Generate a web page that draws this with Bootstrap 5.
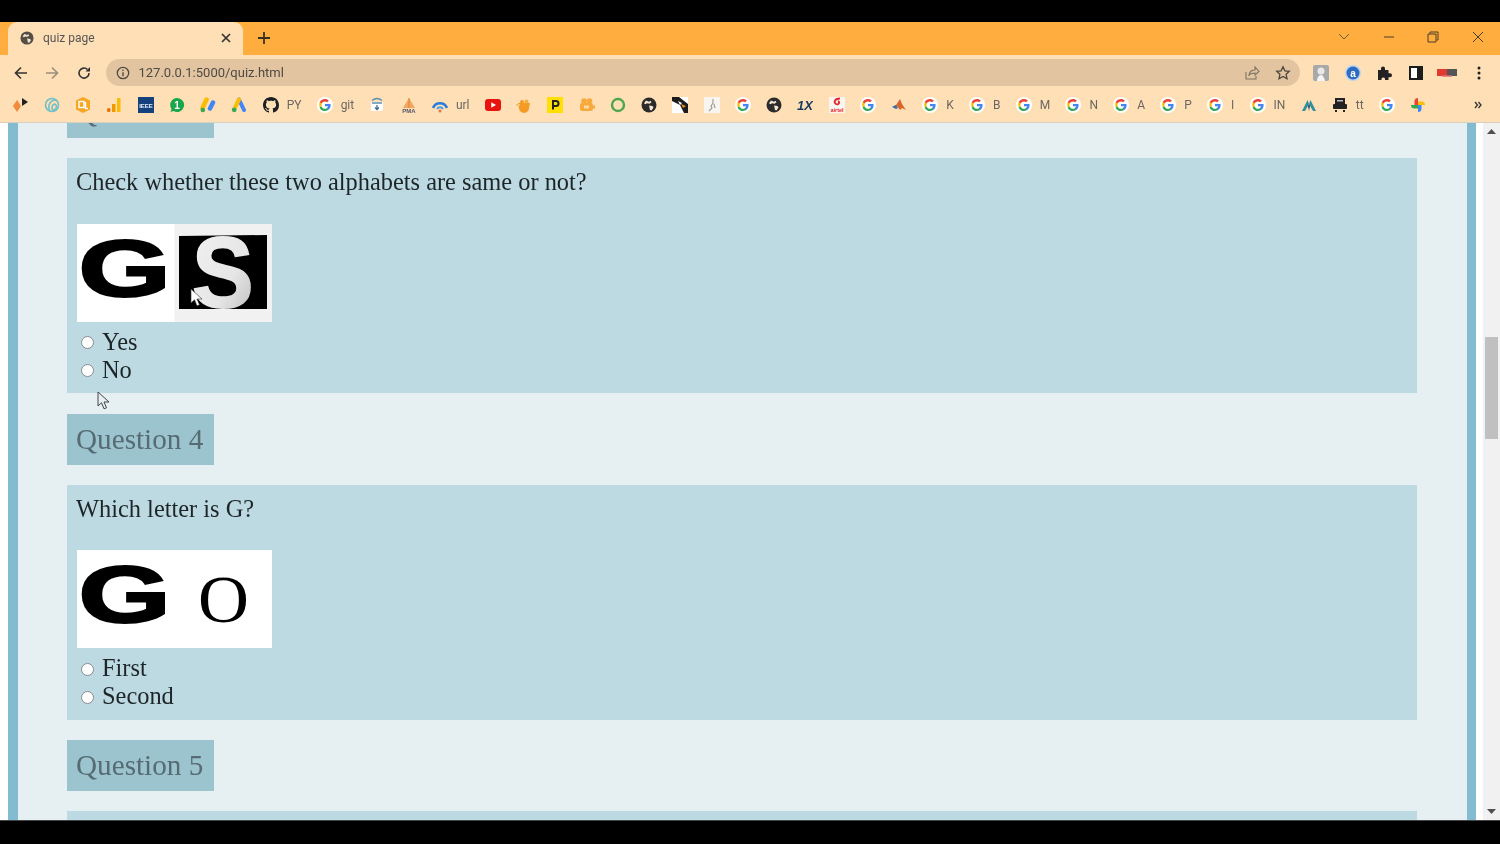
<!DOCTYPE html>
<html lang="en">
<head>
<meta charset="utf-8">
<title>quiz page</title>
<link href="https://cdn.jsdelivr.net/npm/bootstrap@5.3.0/dist/css/bootstrap.min.css" rel="stylesheet">
<style>
html,body{height:100%;overflow:hidden;background:#000}
.screen{width:1500px;height:844px;filter:blur(.35px)}
.screen>*{flex:none}
.bar-top{height:22px;background:#000}
.bar-bottom{height:24px;background:#000;border-top:1px solid #444}
.tabstrip{height:33px;background:#ffad3f;padding-left:8px}
.tab-active{width:235px;height:33px;background:#ffdfb5;border-radius:9px 9px 0 0;padding:0 12px 2px 12px;font:12px Roboto,sans-serif;color:#555}
.tab-active .tab-title{margin-left:9px}
.newtab{margin:-2px 0 0 14px}
.winctl{width:44.5px;justify-content:center}
.win-group{margin-top:-4px}
.toolbar{height:35px;background:#ffdfb5;padding-left:5px}
.tool{width:31.5px;flex:none;justify-content:center}
.omni{width:1194px;height:27px;margin:0 6px 0 6px;background:#e2c5a0;border-radius:14px;padding:0 4px 0 10px;font:13px Roboto,sans-serif;color:#4f4a42}
.omni .url{margin-left:9px}
.star-ico{margin:0 5px 0 15px}
.bookmarks{height:33px;background:#ffdfb5;border-bottom:1px solid #d8cfc0;padding:0 0 3px 5px;font:12px Roboto,sans-serif;color:#6a6660}
.bm{flex:none;padding:0 7.625px;height:100%;gap:8px;display:flex;align-items:center}
.bm-pad{padding-right:7.6px}
.bm-more{width:26px}
.page-view{flex:1 1 0!important;min-height:0;background:#fff;overflow:hidden}
.page-main{width:1483px;overflow:hidden;padding:0 7px 0 8px}
.quiz-frame{height:100%;background:#e6eff1;border-left:10px solid #83bcd1;border-right:9px solid #83bcd1;padding:0 50px 0 49px;overflow:hidden;font-family:"Liberation Serif",serif}
.quiz-scroll{margin-top:-36px}
.q-head{width:147px;height:51px;background:#9cc4cf;color:#566b73;font-size:29.2px;line-height:51px;padding-left:9px;white-space:nowrap;margin-bottom:20px}
.q-box{background:#bddae3;padding:10px 10px 8px;color:#1d2527;font-size:24.4px;line-height:28px;margin-bottom:20.5px;height:235px}
.q-text{height:55.7px;margin:0 0 0 -1px}
.q-img{width:195px;height:98px;margin-bottom:6px;display:block;background:#fff}
.q-opt{height:28px;display:flex;align-items:center;padding-left:4px}
.q-radio{width:13px;height:13px;margin:2px 8px 0 0;border:1.5px solid #8b8b8b;background:#fff;flex:none}
.sbar{width:17px;background:#f1f1f1}
.sbar-btn{height:17px;justify-content:center}
.sbar-thumb{height:102px;width:13px;margin:197px auto 0;background:#c0c0c0}
.sbar-fill{flex:1}
.cursor-mark{position:absolute;pointer-events:none}
.cur-a{left:190px;top:288px}
.cur-b{left:97px;top:391px}
svg{display:block;flex:none}
.svg-bold{font-family:"Liberation Sans",sans-serif;font-weight:700}
.svg-serif{font-family:"Liberation Serif",serif}
.svg-defs{position:absolute}
</style>
</head>
<body>
<svg class="svg-defs" width="0" height="0">
<defs>
<linearGradient id="sgrad" x1="0" y1="0" x2="1" y2="1"><stop offset="0" stop-color="#f2f2f2"/><stop offset=".6" stop-color="#e6e6e6"/><stop offset="1" stop-color="#b8b8b8"/></linearGradient>
<symbol id="goog" viewBox="0 0 16 16"><circle cx="8" cy="8" r="8" fill="#fff"/><path d="M13.6 8.2c0-.4 0-.8-.1-1.200H8v2.300h3.100c-.1.700-.5 1.300-1.200 1.800v1.400h1.900c1.100-1 1.800-2.500 1.800-4.300z" fill="#4285f4"/><path d="M8 14c1.600 0 2.900-.5 3.800-1.400l-1.900-1.400c-.5.400-1.200.6-1.900.6-1.500 0-2.800-1-3.300-2.400H2.800v1.500C3.700 12.800 5.700 14 8 14z" fill="#34a853"/><path d="M4.700 9.400c-.3-.9-.3-1.900 0-2.800V5.100H2.800c-.8 1.500-.8 3.300 0 4.800z" fill="#fbbc05"/><path d="M8 4.400c.8 0 1.600.3 2.200.9l1.700-1.700C10.800 2.600 9.500 2 8 2 5.700 2 3.700 3.200 2.800 5.100l1.900 1.500C5.200 5.300 6.500 4.400 8 4.400z" fill="#ea4335"/></symbol>
<symbol id="globe" viewBox="0 0 16 16"><circle cx="8" cy="8" r="7.500" fill="#2b2b2b"/><path d="M5 3.500l3 1.200 1.500-1 1 1.500-2 1.500-2.500-.5-1.500 1-1.500-1zM8 8.500l3.500.5 1 1.500-2 3-1.500-.5-.5-2.500z" fill="#f4e6d2"/></symbol>
</defs>
</svg>

<div class="screen d-flex flex-column position-relative">
  <div class="bar-top"></div>

  <div class="tabstrip d-flex align-items-center">
    <div class="tab-active d-flex align-items-center">
      <svg width="14" height="14"><use href="#globe" width="14" height="14" opacity=".8"/></svg>
      <span class="tab-title flex-grow-1">quiz page</span>
      <svg width="10" height="10" viewBox="0 0 10 10"><path d="M1 1l8 8M9 1l-8 8" stroke="#333" stroke-width="1.700"/></svg>
    </div>
    <svg class="newtab" width="14" height="14" viewBox="0 0 14 14"><path d="M7 1v12M1 7h12" stroke="#3a3020" stroke-width="1.800"/></svg>
    <div class="ms-auto d-flex align-items-center win-group">
      <div class="winctl d-flex"><svg width="12" height="8" viewBox="0 0 12 8"><path d="M1 1l5 5 5-5" fill="none" stroke="#6d5a3c" stroke-width="1"/></svg></div>
      <div class="winctl d-flex"><svg width="12" height="2" viewBox="0 0 12 2"><path d="M1 1h10" stroke="#4a3c28" stroke-width="1"/></svg></div>
      <div class="winctl d-flex"><svg width="12" height="12" viewBox="0 0 12 12"><path d="M3 2.500V1h8v8H9.500M1 3h8v8H1z" fill="none" stroke="#4a3c28" stroke-width="1"/></svg></div>
      <div class="winctl d-flex"><svg width="12" height="12" viewBox="0 0 12 12"><path d="M1 1l10 10M11 1L1 11" stroke="#4a3c28" stroke-width="1"/></svg></div>
    </div>
  </div>

  <div class="toolbar d-flex align-items-center">
    <div class="tool d-flex"><svg width="14" height="14" viewBox="0 0 14 14"><path d="M13 7H2M7 1.500L1.500 7 7 12.500" fill="none" stroke="#333" stroke-width="1.600"/></svg></div>
    <div class="tool d-flex"><svg width="14" height="14" viewBox="0 0 14 14"><path d="M1 7h11M7 1.500L12.500 7 7 12.500" fill="none" stroke="#9a8e7c" stroke-width="1.600"/></svg></div>
    <div class="tool d-flex"><svg width="14" height="14" viewBox="0 0 14 14"><path d="M12 7a5 5 0 1 1-1.500-3.500" fill="none" stroke="#333" stroke-width="1.600"/><path d="M13 1v4.500H8.500z" fill="#333"/></svg></div>
    <div class="omni d-flex align-items-center">
      <svg width="14" height="14" viewBox="0 0 14 14"><circle cx="7" cy="7" r="5.700" fill="none" stroke="#4f4a42" stroke-width="1.300"/><path d="M7 6.200v4M7 3.700v1.300" stroke="#4f4a42" stroke-width="1.400"/></svg>
      <span class="url">127.0.0.1:5000/quiz.html</span>
      <svg class="ms-auto" width="16" height="16" viewBox="0 0 16 16"><path d="M2 7v7h10v-3M5 10c.5-3 3-5 6-5V2l4 4.500L11 10V8C8.500 8 6.500 8.500 5 10z" fill="none" stroke="#7d7364" stroke-width="1.100"/></svg>
      <svg class="star-ico" width="16" height="16" viewBox="0 0 16 16"><path d="M8 1.800l1.900 4 4.400.5-3.200 3 .9 4.400L8 11.500l-4 2.200.9-4.400-3.200-3 4.400-.5z" fill="none" stroke="#4c463c" stroke-width="1.300"/></svg>
    </div>
    <div class="tool d-flex"><svg width="16" height="16" viewBox="0 0 16 16"><rect width="16" height="16" rx="2" fill="#a8a8a8"/><circle cx="8" cy="6" r="3.500" fill="#e8e8e8"/><path d="M4 16c0-5 3-6 4-6s3 1 4 6z" fill="#f4f4f4"/></svg></div>
    <div class="tool d-flex"><svg width="16" height="16" viewBox="0 0 16 16"><circle cx="8" cy="8" r="8" fill="#bcd3ee"/><circle cx="8" cy="8" r="6.500" fill="#2d6cc0"/><text x="8" y="11.500" text-anchor="middle" font-size="10" font-weight="700" fill="#fff" font-family="Liberation Sans">a</text></svg></div>
    <div class="tool d-flex"><svg width="15" height="15" viewBox="0 0 15 15"><path d="M1 5h3V3.500a2 2 0 0 1 4 0V5h3.500v3.300H13a2 2 0 0 1 0 4h-1.500V15H8v-1.500a2 2 0 0 0-3.500 0V15H1z" fill="#222"/></svg></div>
    <div class="tool d-flex"><svg width="14" height="14" viewBox="0 0 14 14"><path d="M0 0h14v14H0z" fill="#1c1c1c"/><path d="M2 2h6v10H2z" fill="#fff"/></svg></div>
    <div class="tool d-flex"><svg width="20" height="9" viewBox="0 0 20 9"><rect width="10" height="7" y="1" fill="#e23a30"/><rect x="10" width="10" height="7" y="1" fill="#555"/><rect x="5" y="7.500" width="10" height="1.500" fill="#e88"/></svg></div>
    <div class="tool d-flex"><svg width="4" height="14" viewBox="0 0 4 14"><circle cx="2" cy="2" r="1.500" fill="#222"/><circle cx="2" cy="7" r="1.500" fill="#222"/><circle cx="2" cy="12" r="1.500" fill="#222"/></svg></div>
  </div>

  <div class="bookmarks d-flex align-items-center">
    <div class="bm"><svg width="16" height="16" viewBox="0 0 16 16"><path d="M4 3l4 6-4 6-4-6z" fill="#f08c3c"/><path d="M9 1l6 4-6 4z" fill="#222"/></svg></div>
    <div class="bm"><svg width="16" height="16" viewBox="0 0 16 16"><g fill="none" stroke="#6fc0c8" stroke-width="1.600"><circle cx="8" cy="8" r="6.500"/><path d="M6 14C3 9 6 3 12 3M11 14c-4-1-4-6 0-7 2 1 2 5-1 6"/></g></svg></div>
    <div class="bm"><svg width="16" height="16" viewBox="0 0 16 16"><path d="M8 0l7 3.500v9L8 16l-7-3.500v-9z" fill="#f5a623"/><rect x="4" y="4.500" width="5" height="6" fill="none" stroke="#fff" stroke-width="1.400"/><path d="M10.500 5v6.500H13" fill="none" stroke="#fff" stroke-width="1.400"/></svg></div>
    <div class="bm"><svg width="16" height="16" viewBox="0 0 16 16"><rect x="1" y="11" width="3.500" height="4" rx="1.500" fill="#e8710a"/><rect x="6" y="7" width="3.500" height="8" fill="#f29900"/><rect x="11" y="1" width="3.500" height="14" fill="#fbbc05"/></svg></div>
    <div class="bm"><svg width="16" height="16" viewBox="0 0 16 16"><rect width="16" height="16" fill="#14407e"/><text x="8" y="10.500" text-anchor="middle" font-size="6" font-weight="700" fill="#e8eef8" font-family="Liberation Sans">IEEE</text></svg></div>
    <div class="bm"><svg width="16" height="16" viewBox="0 0 16 16"><path d="M8 1a7 7 0 1 1-3.500 13L1.500 15l1-3A7 7 0 0 1 8 1z" fill="#1aa64a"/><text x="8" y="11.500" text-anchor="middle" font-size="10" font-weight="700" fill="#fff" font-family="Liberation Sans">1</text></svg></div>
    <div class="bm"><svg width="16" height="16" viewBox="0 0 16 16"><path d="M6.500 2.500L2.500 11" stroke="#fbbc05" stroke-width="4.500" stroke-linecap="round"/><path d="M13 5.500L10 11.500" stroke="#4285f4" stroke-width="4.500" stroke-linecap="round"/><circle cx="2.800" cy="13" r="2.300" fill="#34a853"/></svg></div>
    <div class="bm"><svg width="16" height="16" viewBox="0 0 16 16"><path d="M8 2.500L13 13" stroke="#4285f4" stroke-width="4" stroke-linecap="round"/><path d="M8 2.500L4.500 9.500" stroke="#fbbc05" stroke-width="4" stroke-linecap="round"/><circle cx="3.200" cy="12.800" r="2.400" fill="#34a853"/></svg></div>
    <div class="bm bm-pad"><svg width="16" height="16" viewBox="0 0 16 16"><path fill="#1b1f23" d="M8 0C3.580 0 0 3.580 0 8c0 3.540 2.290 6.530 5.470 7.590.4.070.55-.170.55-.380 0-.190-.010-.820-.010-1.490-2.010.370-2.530-.490-2.690-.940-.090-.230-.480-.940-.820-1.130-.280-.150-.680-.520-.010-.530.630-.010 1.080.580 1.230.820.720 1.210 1.870.870 2.330.660.070-.520.280-.870.510-1.070-1.780-.200-3.640-.890-3.640-3.950 0-.870.310-1.590.820-2.150-.080-.200-.360-1.020.080-2.120 0 0 .670-.210 2.200.820.640-.180 1.320-.270 2-.270s1.360.090 2 .270c1.530-1.040 2.200-.820 2.200-.820.440 1.100.160 1.920.080 2.120.510.560.820 1.270.820 2.150 0 3.070-1.870 3.750-3.650 3.950.290.250.540.730.540 1.480 0 1.070-.010 1.930-.010 2.200 0 .210.150.460.550.380A8.010 8.010 0 0 0 16 8c0-4.420-3.580-8-8-8z"/></svg><span>PY</span></div>
    <div class="bm bm-pad"><svg width="16" height="16"><use href="#goog" width="16" height="16"/></svg><span>git</span></div>
    <div class="bm"><svg width="16" height="16" viewBox="0 0 16 16"><rect x="2" y="5" width="12" height="9" rx="1" fill="#fff"/><path d="M3 6h10M3 3.500c3-2.500 7-2.500 10 0" fill="none" stroke="#5b8fb5" stroke-width="1.400"/><path d="M8 8v4M6 10.500L8 12.500l2-2" fill="none" stroke="#3b6b8f" stroke-width="1.300"/></svg></div>
    <div class="bm"><svg width="16" height="16" viewBox="0 0 16 16"><path d="M8 1l6 10H2z" fill="#f0a860"/><path d="M8 1v10" stroke="#e88030"/><text x="8" y="15.500" text-anchor="middle" font-size="6" font-weight="700" fill="#556" font-family="Liberation Sans">PMA</text></svg></div>
    <div class="bm bm-pad"><svg width="16" height="16" viewBox="0 0 16 16"><path d="M1 11a7.500 7.500 0 0 1 14 0" fill="none" stroke="#2d7ddb" stroke-width="2.600"/><path d="M5 12a3.500 3.500 0 0 1 6 0" fill="none" stroke="#44a0e8" stroke-width="2"/><circle cx="8" cy="14" r="1.500" fill="#e8743c"/></svg><span>url</span></div>
    <div class="bm"><svg width="16" height="16" viewBox="0 0 16 16"><rect y="2" width="16" height="12" rx="3" fill="#e8130e"/><path d="M6.300 5.200L11 8l-4.700 2.800z" fill="#fff"/></svg></div>
    <div class="bm"><svg width="16" height="16" viewBox="0 0 16 16"><path d="M2 6h12l-1 5a3 3 0 0 1-10 0z" fill="#f59b23"/><circle cx="6" cy="5" r="2" fill="#f59b23"/><circle cx="10.500" cy="4.500" r="2" fill="#f0b040"/><rect x="0" y="7" width="4" height="2" fill="#f3c17a"/></svg></div>
    <div class="bm"><svg width="16" height="16" viewBox="0 0 16 16"><rect width="16" height="16" fill="#ffe000"/><path d="M6 12.500V4h3a2.500 2.500 0 0 1 0 5H6" fill="none" stroke="#222" stroke-width="2"/></svg></div>
    <div class="bm"><svg width="16" height="16" viewBox="0 0 16 16"><rect x="1" y="6" width="13" height="8" rx="2" fill="#f7a93c"/><circle cx="5" cy="4" r="2.800" fill="#f7a93c"/><circle cx="10.500" cy="4" r="2.800" fill="#f7a93c"/><path d="M14 9l2-1v4l-2-1z" fill="#f7a93c"/><rect x="5" y="8.500" width="5" height="3" fill="#ffd9a0"/></svg></div>
    <div class="bm"><svg width="16" height="16" viewBox="0 0 16 16"><circle cx="8" cy="8" r="6" fill="none" stroke="#4ca64c" stroke-width="2.400"/></svg></div>
    <div class="bm"><svg width="16" height="16"><use href="#globe" width="16" height="16"/></svg></div>
    <div class="bm"><svg width="16" height="16" viewBox="0 0 16 16"><rect width="16" height="16" fill="#fff"/><path d="M0 0h7l9 7v9h-4L8 8 0 4z" fill="#1c1c1c"/><path d="M6 4l4 2-2 2z" fill="#fff"/><path d="M9 7l5 2-3 2z" fill="#e88a20"/></svg></div>
    <div class="bm"><svg width="16" height="16" viewBox="0 0 16 16"><rect width="16" height="16" fill="#f8f5f0"/><path d="M9 2v4l-2 3 1 2-3 3M10 7l1 4" fill="none" stroke="#999" stroke-width="1.100"/></svg></div>
    <div class="bm"><svg width="16" height="16"><use href="#goog" width="16" height="16"/></svg></div>
    <div class="bm"><svg width="16" height="16"><use href="#globe" width="16" height="16"/></svg></div>
    <div class="bm"><svg width="16" height="16" viewBox="0 0 16 16"><text x="8" y="12.500" text-anchor="middle" font-size="13" font-weight="700" font-style="italic" fill="#17385e" font-family="Liberation Sans">1X</text></svg></div>
    <div class="bm"><svg width="16" height="16" viewBox="0 0 16 16"><rect width="16" height="16" fill="#fbf6f0"/><path d="M11 1.500C6 1.500 4 5 7 7c3 1.500 4-2 2-3" fill="none" stroke="#e3242b" stroke-width="1.800"/><text x="8" y="14.500" text-anchor="middle" font-size="5.500" font-weight="700" fill="#e3242b" font-family="Liberation Sans">airtel</text></svg></div>
    <div class="bm"><svg width="16" height="16"><use href="#goog" width="16" height="16"/></svg></div>
    <div class="bm"><svg width="16" height="16" viewBox="0 0 16 16"><path d="M1 10l4-2 4-6 2 5 4 6-4-2-2 2-3-4z" fill="#d8662c"/><path d="M1 10l4-2 2 3-2 1z" fill="#3a6ea8"/></svg></div>
    <div class="bm bm-pad"><svg width="16" height="16"><use href="#goog" width="16" height="16"/></svg><span>K</span></div>
    <div class="bm bm-pad"><svg width="16" height="16"><use href="#goog" width="16" height="16"/></svg><span>B</span></div>
    <div class="bm bm-pad"><svg width="16" height="16"><use href="#goog" width="16" height="16"/></svg><span>M</span></div>
    <div class="bm bm-pad"><svg width="16" height="16"><use href="#goog" width="16" height="16"/></svg><span>N</span></div>
    <div class="bm bm-pad"><svg width="16" height="16"><use href="#goog" width="16" height="16"/></svg><span>A</span></div>
    <div class="bm bm-pad"><svg width="16" height="16"><use href="#goog" width="16" height="16"/></svg><span>P</span></div>
    <div class="bm bm-pad"><svg width="16" height="16"><use href="#goog" width="16" height="16"/></svg><span>I</span></div>
    <div class="bm bm-pad"><svg width="16" height="16"><use href="#goog" width="16" height="16"/></svg><span>IN</span></div>
    <div class="bm"><svg width="16" height="16" viewBox="0 0 16 16"><path d="M6.500 3L1 14h3l4-7zM9.500 3L15 14h-3L8 7z" fill="#2f8f9f"/><path d="M7 9l1-2 1 2-1 5z" fill="#1d4f6e"/></svg></div>
    <div class="bm bm-pad"><svg width="16" height="16" viewBox="0 0 16 16"><rect x="3" y="1" width="10" height="7" fill="#222"/><rect x="1" y="7" width="14" height="5" rx="1" fill="#222"/><rect x="3" y="13" width="2" height="2" fill="#222"/><rect x="11" y="13" width="2" height="2" fill="#222"/><rect x="5" y="3" width="6" height="1.500" fill="#bbb"/></svg><span>tt</span></div>
    <div class="bm"><svg width="16" height="16"><use href="#goog" width="16" height="16"/></svg></div>
    <div class="bm"><svg width="16" height="16" viewBox="0 0 16 16"><path d="M8 8V1a3.500 3.500 0 0 0-3.500 3.500V8z" fill="#ea4335"/><path d="M8 8h7a3.500 3.500 0 0 0-3.500-3.500H8z" fill="#fbbc05"/><path d="M8 8v7a3.500 3.500 0 0 0 3.500-3.500V8z" fill="#4285f4"/><path d="M8 8H1a3.500 3.500 0 0 0 3.500 3.500H8z" fill="#34a853"/></svg></div>
    <div class="ms-auto bm-more"><svg width="8" height="8" viewBox="0 0 8 8"><path d="M1 1l2.500 3L1 7M4.500 1L7 4 4.500 7" fill="none" stroke="#333" stroke-width="1.300"/></svg></div>
  </div>

  <div class="page-view d-flex">
    <div class="page-main">
      <div class="quiz-frame">
        <div class="quiz-scroll">
          <div class="q-head">Question 3</div>
          <div class="q-box">
            <p class="q-text">Check whether these two alphabets are same or not?</p>
            <svg class="q-img" viewBox="0 0 195 98">
              <rect x="97.500" width="97.500" height="98" fill="#f1f1f1"/>
              <text class="svg-bold" transform="translate(1.500 72) scale(1.520 1.020)" font-size="78" stroke="#000" stroke-width="2.200">G</text>
              <path d="M102 12l88-1 0 74-88 0z" fill="#000"/>
              <text class="svg-bold" transform="translate(115 83) scale(1.100 1.200)" font-size="84" fill="url(#sgrad)" stroke="url(#sgrad)" stroke-width="1.500">S</text>
            </svg>
            <label class="q-opt"><input class="form-check-input q-radio" type="radio" name="q3">Yes</label>
            <label class="q-opt"><input class="form-check-input q-radio" type="radio" name="q3">No</label>
          </div>
          <div class="q-head">Question 4</div>
          <div class="q-box">
            <p class="q-text">Which letter is G?</p>
            <svg class="q-img" viewBox="0 0 195 98">
              <text class="svg-bold" transform="translate(1.500 72) scale(1.520 1.020)" font-size="78" stroke="#000" stroke-width="2.200">G</text>
              <text class="svg-serif" transform="translate(121 72) scale(.98 .95)" font-size="72">O</text>
            </svg>
            <label class="q-opt"><input class="form-check-input q-radio" type="radio" name="q4">First</label>
            <label class="q-opt"><input class="form-check-input q-radio" type="radio" name="q4">Second</label>
          </div>
          <div class="q-head">Question 5</div>
          <div class="q-box"></div>
        </div>
      </div>
    </div>
    <div class="sbar d-flex flex-column">
      <div class="sbar-btn d-flex align-items-center"><svg width="9" height="5" viewBox="0 0 9 5"><path d="M4.500 0L9 5H0z" fill="#505050"/></svg></div>
      <div class="sbar-thumb"></div>
      <div class="sbar-fill"></div>
      <div class="sbar-btn d-flex align-items-center"><svg width="9" height="5" viewBox="0 0 9 5"><path d="M4.500 5L9 0H0z" fill="#505050"/></svg></div>
    </div>
  </div>

  <div class="bar-bottom"></div>

  <svg class="cursor-mark cur-a" width="13" height="19" viewBox="0 0 13 19"><path d="M1 1v14l3.500-3.200 2.500 6 2.500-1-2.500-5.800H12z" fill="#fff" stroke="#333" stroke-width=".6"/></svg>
  <svg class="cursor-mark cur-b" width="13" height="19" viewBox="0 0 13 19"><path d="M1 1v14l3.500-3.200 2.500 6 2.500-1-2.500-5.800H12z" fill="#e6eff1" stroke="#444" stroke-width="1"/></svg>
</div>
<script src="https://cdn.jsdelivr.net/npm/bootstrap@5.3.0/dist/js/bootstrap.bundle.min.js"></script>
</body>
</html>
